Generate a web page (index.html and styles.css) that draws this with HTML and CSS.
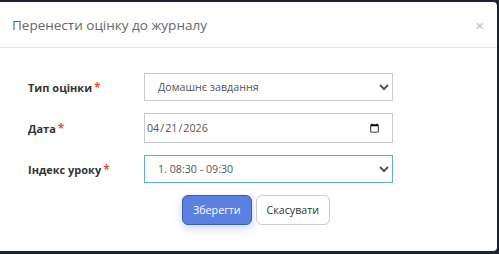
FILE: index.html
```html
<!DOCTYPE html>
<html lang="uk">
<head>
  <meta charset="UTF-8" />
  <title>Перенести оцінку до журналу</title>
  <link rel="stylesheet" href="styles.css">
</head>
<body>
  <div class="modal">
    <div class="modal-header">
      <h4 class="modal-title">Перенести оцінку до журналу</h4>
      <span class="close">&times;</span>
    </div>

    <form class="modal-body">
      <label class="field-label" for="markType">Тип оцінки<span class="req">*</span></label>
      <select id="markType" class="control">
        <option>Домашнє завдання</option>
        <option>Контрольна робота</option>
      </select>

      <label class="field-label" for="markDate">Дата<span class="req">*</span></label>
      <input id="markDate" class="control control-date" type="date" value="2026-04-21">

      <label class="field-label" for="lessonIndex">Індекс уроку<span class="req">*</span></label>
      <select id="lessonIndex" class="control is-focus">
        <option>1. 08:30 - 09:30</option>
        <option>2. 09:40 - 10:40</option>
      </select>

      <div class="actions">
        <button type="button" class="btn btn-primary">Зберегти</button>
        <button type="button" class="btn btn-default">Скасувати</button>
      </div>
    </form>
  </div>
</body>
</html>
```

FILE: styles.css
```css
body {
  margin: 0;
  padding-top: 2px;
  background: #1c2331;
  font-family: "Open Sans", Arial, sans-serif;
}

.modal {
  width: 497px;
  height: 249px;
  background: #fff;
  border-radius: 0 4px 4px 0;
}

.modal-header {
  display: flex;
  align-items: center;
  justify-content: space-between;
  height: 45px;
  padding: 0 12px;
  border-bottom: 1px solid #e5e5e5;
}

.modal-title {
  margin: 0;
  font-size: 13.5px;
  font-weight: 400;
  color: #666;
}

.close {
  font-size: 15px;
  font-weight: 700;
  color: #ccc;
  margin-right: 1px;
}

.modal-body {
  display: grid;
  grid-template-columns: 116px 249px;
  row-gap: 12px;
  align-items: center;
  padding: 25px 0 0 28px;
}

.field-label {
  font-size: 11px;
  font-weight: 700;
  color: #333;
}

.req {
  color: #e5532d;
  font-size: 12px;
  margin-left: 2px;
}

.control {
  box-sizing: border-box;
  height: 28px;
  width: 249px;
  border: 1px solid #ccc;
  border-radius: 0;
  background: #fff;
  font-family: "Open Sans", Arial, sans-serif;
  font-size: 10.7px;
  color: #555;
  padding: 0 9px;
}

.control-date {
  height: 30px;
  padding: 0 10px 0 1px;
}

.is-focus {
  border-color: #5dade2;
  outline: none;
}

.actions {
  grid-column: 2;
  display: flex;
  gap: 4px;
  padding-left: 38px;
}

.btn {
  height: 30px;
  padding: 0 10px;
  border-radius: 6px;
  font-family: "Open Sans", Arial, sans-serif;
  font-size: 10.7px;
}

.btn-primary {
  background: #5b80e0;
  border: 1px solid #3b5bb5;
  color: #fff;
  box-shadow: 0 3px 8px rgba(91, 128, 224, 0.35);
}

.btn-default {
  background: #fff;
  border: 1px solid #ccc;
  color: #333;
}
```
